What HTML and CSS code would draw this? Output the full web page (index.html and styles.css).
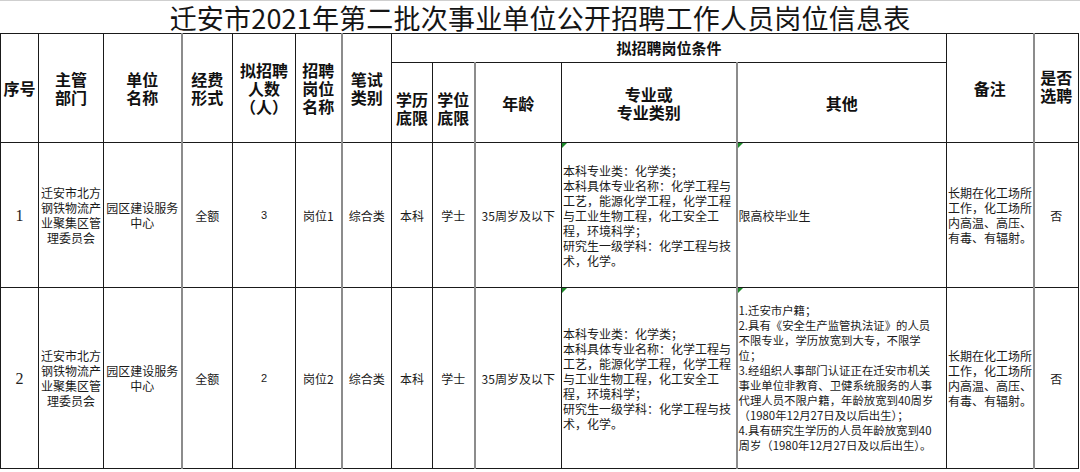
FILE: index.html
```html
<!DOCTYPE html>
<html lang="zh-CN">
<head>
<meta charset="utf-8">
<title>岗位信息表</title>
<link rel="stylesheet" href="styles.css">
</head>
<body>
<div class="sheet">
  <div class="title">迁安市2021年第二批次事业单位公开招聘工作人员岗位信息表</div>
  <table class="grid">
    <colgroup>
      <col class="c1"><col class="c2"><col class="c3 g"><col class="c4"><col class="c5"><col class="c6 g"><col class="c7"><col class="c8"><col class="c9 g"><col class="c10"><col class="c11 g"><col class="c12"><col class="c13 g"><col class="c14">
    </colgroup>
    <thead>
      <tr class="h1">
        <th rowspan="2">序号</th>
        <th rowspan="2">主管<br>部门</th>
        <th rowspan="2">单位<br>名称</th>
        <th rowspan="2">经费<br>形式</th>
        <th rowspan="2">拟招聘<br>人数<br>（人）</th>
        <th rowspan="2">招聘<br>岗位<br>名称</th>
        <th rowspan="2">笔试<br>类别</th>
        <th colspan="5" class="group">拟招聘岗位条件</th>
        <th rowspan="2">备注</th>
        <th rowspan="2" class="top">是否<br>选聘</th>
      </tr>
      <tr class="h2">
        <th class="low">学历<br>底限</th>
        <th class="low">学位<br>底限</th>
        <th>年龄</th>
        <th>专业或<br>专业类别</th>
        <th>其他</th>
      </tr>
    </thead>
    <tbody>
      <tr class="r1">
        <td class="num">1</td>
        <td>迁安市北方<br>钢铁物流产<br>业聚集区管<br>理委员会</td>
        <td>园区建设服务<br>中心</td>
        <td>全额</td>
        <td class="small">3</td>
        <td>岗位1</td>
        <td>综合类</td>
        <td>本科</td>
        <td>学士</td>
        <td>35周岁及以下</td>
        <td class="left mark">本科专业类：化学类；<br>本科具体专业名称：化学工程与<br>工艺，能源化学工程，化学工程<br>与工业生物工程，化工安全工<br>程，环境科学；<br>研究生一级学科：化学工程与技<br>术，化学。</td>
        <td class="left mark">限高校毕业生</td>
        <td class="left">长期在化工场所<br>工作，化工场所<br>内高温、高压、<br>有毒、有辐射。</td>
        <td>否</td>
      </tr>
      <tr class="r2">
        <td class="num">2</td>
        <td>迁安市北方<br>钢铁物流产<br>业聚集区管<br>理委员会</td>
        <td>园区建设服务<br>中心</td>
        <td>全额</td>
        <td class="small">2</td>
        <td>岗位2</td>
        <td>综合类</td>
        <td>本科</td>
        <td>学士</td>
        <td>35周岁及以下</td>
        <td class="left mark">本科专业类：化学类；<br>本科具体专业名称：化学工程与<br>工艺，能源化学工程，化学工程<br>与工业生物工程，化工安全工<br>程，环境科学；<br>研究生一级学科：化学工程与技<br>术，化学。</td>
        <td class="left mark dense">1.迁安市户籍；<br>2.具有《安全生产监管执法证》的人员<br>不限专业，学历放宽到大专，不限学<br>位；<br>3.经组织人事部门认证正在迁安市机关<br>事业单位非教育、卫健系统服务的人事<br>代理人员不限户籍，年龄放宽到40周岁<br>（1980年12月27日及以后出生）；<br>4.具有研究生学历的人员年龄放宽到40<br>周岁（1980年12月27日及以后出生）。</td>
        <td class="left">长期在化工场所<br>工作，化工场所<br>内高温、高压、<br>有毒、有辐射。</td>
        <td>否</td>
      </tr>
    </tbody>
  </table>
</div>
</body>
</html>
```
FILE: styles.css
```css
html, body {
  margin: 0;
  padding: 0;
  background: #ffffff;
}

body {
  font-family: "Noto Sans CJK SC", "Liberation Sans", sans-serif;
  color: #111;
}

.sheet {
  width: 1080px;
  border-top: 1px solid #cfcfcf;
}

.title {
  height: 32px;
  line-height: 34px;
  font-size: 27px;
  text-align: center;
  color: #151515;
  letter-spacing: 0.2px;
  white-space: nowrap;
}

.grid {
  border-collapse: collapse;
  table-layout: fixed;
  width: 1079px;
}

.grid th,
.grid td {
  border: 1px solid #1a1a1a;
  padding: 0;
  text-align: center;
  vertical-align: middle;
  white-space: nowrap;
}

.grid col.g {
  border-right: 2px solid #8c8c8c;
}

.c1 { width: 38px; }
.c2 { width: 65px; }
.c3 { width: 78px; }
.c4 { width: 51px; }
.c5 { width: 63px; }
.c6 { width: 46px; }
.c7 { width: 50px; }
.c8 { width: 41px; }
.c9 { width: 42px; }
.c10 { width: 87px; }
.c11 { width: 175px; }
.c12 { width: 210px; }
.c13 { width: 87px; }
.c14 { width: 45px; }

.grid th {
  font-size: 16px;
  font-weight: 700;
  line-height: 18px;
  color: #111;
}

.grid th.group {
  font-size: 15px;
}

.grid th.low {
  padding-top: 10px;
}

.grid th.top {
  padding-bottom: 4px;
}

.h1 { height: 29px; }
.h2 { height: 80px; }
.r1 { height: 145px; }
.r2 { height: 181px; }

.grid td {
  font-size: 12px;
  line-height: 15px;
  color: #1a1a1a;
}

.grid td.left {
  text-align: left;
  padding-left: 1px;
}

.grid td.dense {
  font-size: 11.4px;
}

.grid td.num {
  font-family: "Liberation Serif", serif;
  font-size: 16px;
  color: #222;
}

.grid td.small {
  font-family: "Liberation Sans", sans-serif;
  font-size: 11px;
}

.grid td.mark {
  position: relative;
}

.grid td.mark::before {
  content: "";
  position: absolute;
  top: 0;
  left: 0;
  width: 0;
  height: 0;
  border-top: 5px solid #1d8a2a;
  border-right: 5px solid transparent;
}
```
